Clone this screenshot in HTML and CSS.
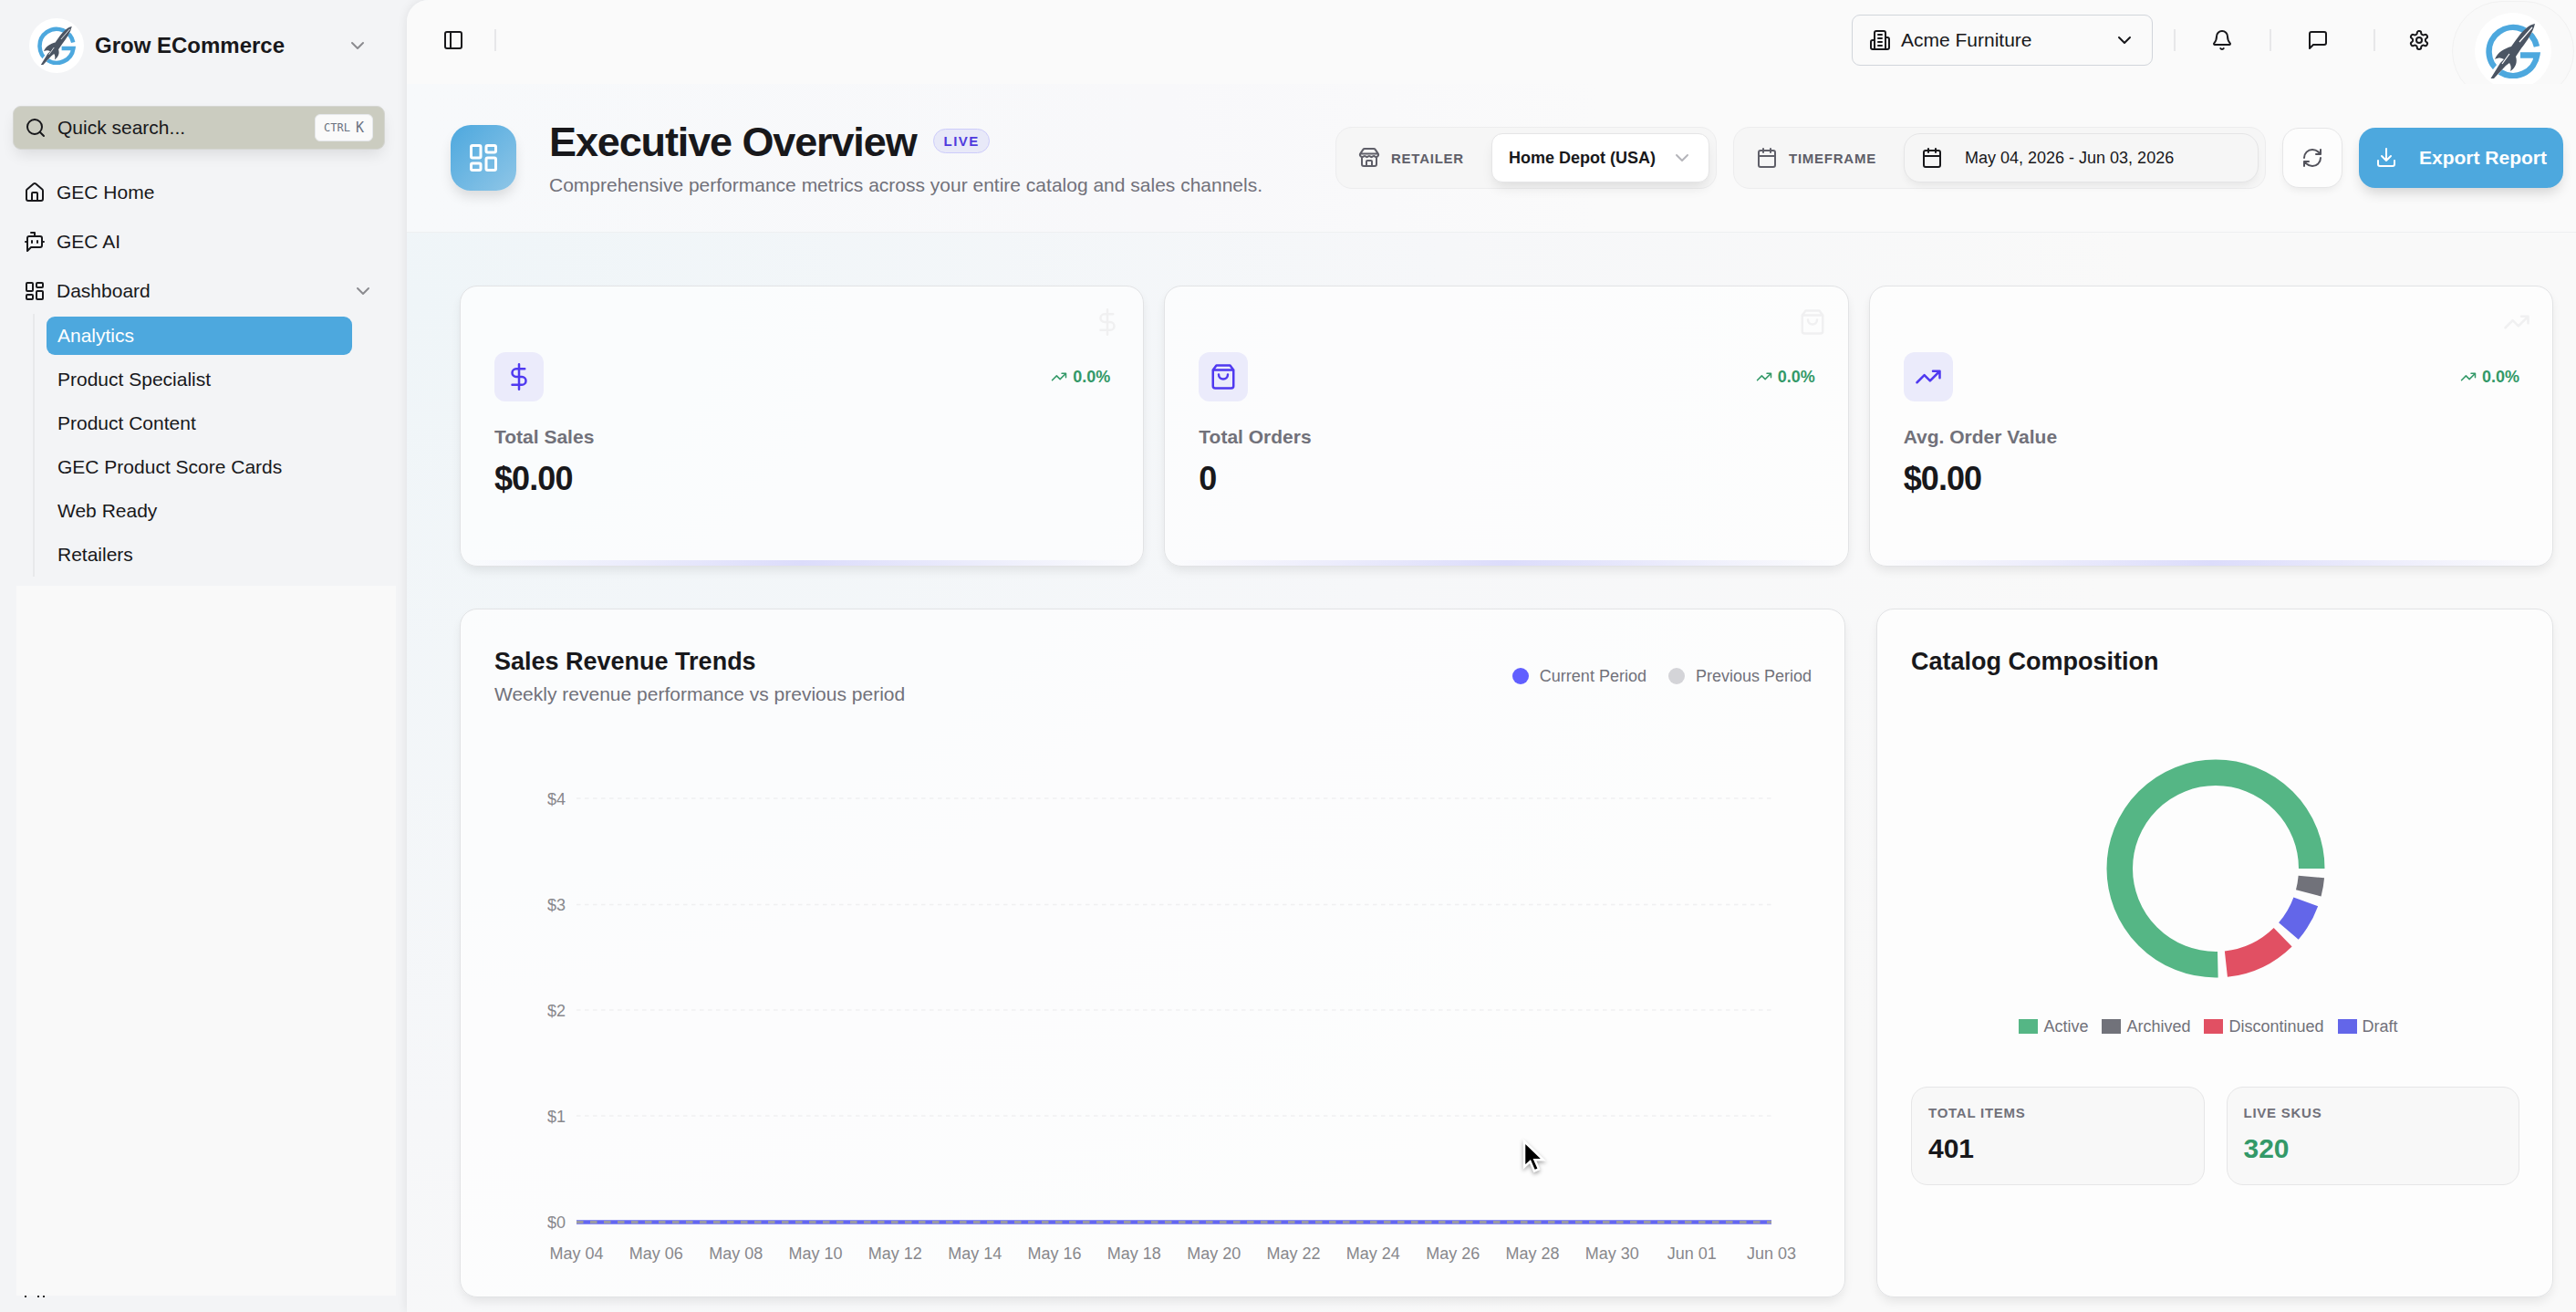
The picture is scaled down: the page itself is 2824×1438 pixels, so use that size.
FILE: index.html
```html
<!DOCTYPE html>
<html lang="en">
<head>
  <meta charset="UTF-8" />
  <meta name="viewport" content="width=device-width, initial-scale=1" />
  <title>Executive Overview</title>
  <link rel="stylesheet" href="styles.css">
</head>
<body>

  <!-- shared icons -->
  <svg class="sprite">
    <symbol id="logo" viewBox="0 0 60 60">
      <path class="logo-ring" d="M56 25 A26.500 26.500 0 1 0 56.300 34.400 L38 34.400" />
      <path class="logo-gap" d="M56 -3 L1 65" />
      <path class="logo-rocket" d="M54 0 C47 1 40 8 33 18 L28 25 C21 27 13 31 10 39 C14 37 17 37 20 39 L16 43 L5.500 60 L9 60 L22 46 L26 43 C28 46 28 49 27 52 C33 48 35 42 33 36 L39 27 C46 18 52 9 54 0 Z" />
      <path class="logo-shine" d="M51 4 L37 20 M26 33 L18 44" />
    </symbol>
    <symbol id="chevron" viewBox="0 0 24 24"><path d="m6 9 6 6 6-6" /></symbol>
    <symbol id="dashboard" viewBox="0 0 24 24">
      <rect x="3" y="3" width="7" height="9" rx="1" /><rect x="14" y="3" width="7" height="5" rx="1" />
      <rect x="14" y="12" width="7" height="9" rx="1" /><rect x="3" y="16" width="7" height="5" rx="1" />
    </symbol>
    <symbol id="calendar" viewBox="0 0 24 24"><path d="M8 2v4M16 2v4M3 10h18" /><rect x="3" y="4" width="18" height="18" rx="2" /></symbol>
    <symbol id="dollar" viewBox="0 0 24 24"><path d="M12 1v22M17 5H9.500a3.500 3.500 0 0 0 0 7h5a3.500 3.500 0 0 1 0 7H6" /></symbol>
    <symbol id="bag" viewBox="0 0 24 24"><path d="M6 2 3 6v14a2 2 0 0 0 2 2h14a2 2 0 0 0 2-2V6l-3-4ZM3 6h18M16 10a4 4 0 0 1-8 0" /></symbol>
    <symbol id="trend" viewBox="0 0 24 24"><path d="M16 7h6v6M22 7l-8.500 8.500-5-5L2 17" /></symbol>
  </svg>

  <aside class="sidebar">
    <div class="brand">
      <div class="brand-logo"><svg><use href="#logo" /></svg></div>
      <span class="brand-name">Grow ECommerce</span>
      <svg class="icon muted"><use href="#chevron" /></svg>
    </div>

    <div class="search">
      <svg class="icon" viewBox="0 0 24 24"><circle cx="11" cy="11" r="8" /><path d="m21 21-4.300-4.300" /></svg>
      <span>Quick search...</span>
      <kbd><small>CTRL</small>K</kbd>
    </div>

    <nav class="nav">
      <a class="nav-item">
        <svg class="icon" viewBox="0 0 24 24"><path d="M15 21v-8a1 1 0 0 0-1-1h-4a1 1 0 0 0-1 1v8" /><path d="M3 10a2 2 0 0 1 .709-1.528l7-6a2 2 0 0 1 2.582 0l7 6A2 2 0 0 1 21 10v9a2 2 0 0 1-2 2H5a2 2 0 0 1-2-2z" /></svg>
        GEC Home
      </a>
      <a class="nav-item">
        <svg class="icon" viewBox="0 0 24 24"><path d="M12 6V2H8M8 18l-4 4V8a2 2 0 0 1 2-2h12a2 2 0 0 1 2 2v8a2 2 0 0 1-2 2ZM2 12h2M9 11v2M15 11v2M20 12h2" /></svg>
        GEC AI
      </a>
      <a class="nav-item">
        <svg class="icon"><use href="#dashboard" /></svg>
        Dashboard
        <svg class="icon muted push"><use href="#chevron" /></svg>
      </a>
      <div class="subnav">
        <a class="active">Analytics</a>
        <a>Product Specialist</a>
        <a>Product Content</a>
        <a>GEC Product Score Cards</a>
        <a>Web Ready</a>
        <a>Retailers</a>
      </div>
    </nav>

    <div class="blank-panel"></div>
    <div class="clipped"><i></i><i></i><i></i></div>
  </aside>

  <main class="main">
    <div class="topbar">
      <svg class="icon" viewBox="0 0 24 24"><rect x="3" y="3" width="18" height="18" rx="2" /><path d="M9 3v18" /></svg>
      <span class="divider first"></span>

      <div class="company">
        <svg class="icon" viewBox="0 0 24 24"><path d="M6 22V4a2 2 0 0 1 2-2h8a2 2 0 0 1 2 2v18ZM6 12H4a2 2 0 0 0-2 2v6a2 2 0 0 0 2 2h2M18 9h2a2 2 0 0 1 2 2v9a2 2 0 0 1-2 2h-2M10 6h4M10 10h4M10 14h4M10 18h4" /></svg>
        <span>Acme Furniture</span>
        <svg class="icon push"><use href="#chevron" /></svg>
      </div>
      <span class="divider d1"></span>
      <svg class="icon" viewBox="0 0 24 24"><path d="M10.268 21a2 2 0 0 0 3.464 0M3.262 15.326A1 1 0 0 0 4 17h16a1 1 0 0 0 .740-1.673C19.410 13.956 18 12.499 18 8A6 6 0 0 0 6 8c0 4.499-1.411 5.956-2.738 7.326" /></svg>
      <span class="divider d2"></span>
      <svg class="icon" viewBox="0 0 24 24"><path d="M21 15a2 2 0 0 1-2 2H7l-4 4V5a2 2 0 0 1 2-2h14a2 2 0 0 1 2 2z" /></svg>
      <span class="divider d3"></span>
      <svg class="icon" viewBox="0 0 24 24"><path d="M12.220 2h-.440a2 2 0 0 0-2 2v.180a2 2 0 0 1-1 1.730l-.430.250a2 2 0 0 1-2 0l-.150-.080a2 2 0 0 0-2.730.730l-.220.380a2 2 0 0 0 .730 2.730l.150.100a2 2 0 0 1 1 1.720v.510a2 2 0 0 1-1 1.740l-.150.090a2 2 0 0 0-.730 2.730l.220.380a2 2 0 0 0 2.730.730l.150-.080a2 2 0 0 1 2 0l.430.250a2 2 0 0 1 1 1.730V20a2 2 0 0 0 2 2h.440a2 2 0 0 0 2-2v-.180a2 2 0 0 1 1-1.730l.430-.250a2 2 0 0 1 2 0l.150.080a2 2 0 0 0 2.730-.730l.220-.390a2 2 0 0 0-.730-2.730l-.150-.080a2 2 0 0 1-1-1.740v-.500a2 2 0 0 1 1-1.740l.150-.090a2 2 0 0 0 .730-2.730l-.220-.380a2 2 0 0 0-2.730-.730l-.150.080a2 2 0 0 1-2 0l-.430-.250a2 2 0 0 1-1-1.730V4a2 2 0 0 0-2-2z" /><circle cx="12" cy="12" r="3" /></svg>
      <div class="avatar-btn"><div class="avatar"><svg><use href="#logo" /></svg></div></div>
    </div>

    <header class="page-header">
      <div class="page-icon"><svg class="icon"><use href="#dashboard" /></svg></div>
      <div class="page-title">
        <div class="title-row">
          <h1>Executive Overview</h1>
          <span class="live">LIVE</span>
        </div>
        <p>Comprehensive performance metrics across your entire catalog and sales channels.</p>
      </div>

      <div class="filter retailer">
        <svg class="icon" viewBox="0 0 24 24"><path d="M15 21v-5a1 1 0 0 0-1-1h-4a1 1 0 0 0-1 1v5M2.500 7.500h19M17.774 10.310a1.120 1.120 0 0 0-1.549 0 2.500 2.500 0 0 1-3.451 0 1.120 1.120 0 0 0-1.548 0 2.500 2.500 0 0 1-3.452 0 1.120 1.120 0 0 0-1.549 0 2.500 2.500 0 0 1-3.770-3.248l2.889-4.184A2 2 0 0 1 7 2h10a2 2 0 0 1 1.653.873l2.895 4.192a2.500 2.500 0 0 1-3.774 3.244M4 10.950V19a2 2 0 0 0 2 2h12a2 2 0 0 0 2-2v-8.050" /></svg>
        <label>RETAILER</label>
        <div class="select">
          Home Depot (USA)
          <svg class="icon"><use href="#chevron" /></svg>
        </div>
      </div>
      <div class="filter timeframe">
        <svg class="icon"><use href="#calendar" /></svg>
        <label>TIMEFRAME</label>
        <div class="dates">
          <svg class="icon"><use href="#calendar" /></svg>
          May 04, 2026 - Jun 03, 2026
        </div>
      </div>
      <button class="refresh">
        <svg class="icon" viewBox="0 0 24 24"><path d="M3 12a9 9 0 0 1 9-9 9.750 9.750 0 0 1 6.740 2.740L21 8M21 3v5h-5M21 12a9 9 0 0 1-9 9 9.750 9.750 0 0 1-6.740-2.740L3 16M8 16H3v5" /></svg>
      </button>
      <button class="export">
        <svg class="icon" viewBox="0 0 24 24"><path d="M21 15v4a2 2 0 0 1-2 2H5a2 2 0 0 1-2-2v-4M7 10l5 5 5-5M12 15V2" /></svg>
        Export Report
      </button>
    </header>

    <section class="content">
      <div class="kpis">
        <div class="card kpi">
          <svg class="icon ghost"><use href="#dollar" /></svg>
          <div class="kpi-top">
            <div class="tile"><svg class="icon"><use href="#dollar" /></svg></div>
            <div class="change"><svg class="icon"><use href="#trend" /></svg>0.0%</div>
          </div>
          <div class="kpi-label">Total Sales</div>
          <div class="kpi-value">$0.00</div>
        </div>
        <div class="card kpi">
          <svg class="icon ghost"><use href="#bag" /></svg>
          <div class="kpi-top">
            <div class="tile"><svg class="icon"><use href="#bag" /></svg></div>
            <div class="change"><svg class="icon"><use href="#trend" /></svg>0.0%</div>
          </div>
          <div class="kpi-label">Total Orders</div>
          <div class="kpi-value">0</div>
        </div>
        <div class="card kpi">
          <svg class="icon ghost"><use href="#trend" /></svg>
          <div class="kpi-top">
            <div class="tile"><svg class="icon"><use href="#trend" /></svg></div>
            <div class="change"><svg class="icon"><use href="#trend" /></svg>0.0%</div>
          </div>
          <div class="kpi-label">Avg. Order Value</div>
          <div class="kpi-value">$0.00</div>
        </div>
      </div>

      <div class="charts">
        <div class="card trends">
          <div class="trends-head">
            <div>
              <h2>Sales Revenue Trends</h2>
              <p>Weekly revenue performance vs previous period</p>
            </div>
            <div class="legend">
              <span><i class="dot current"></i>Current Period</span>
              <span><i class="dot previous"></i>Previous Period</span>
            </div>
          </div>
          <svg class="line-chart" width="1443" height="600" viewBox="0 0 1443 600">
            <g class="grid">
              <path d="M90 76H1400M90 192.500H1400M90 308H1400M90 424H1400" />
            </g>
            <path class="line-current" d="M90 540.500H1400" />
            <path class="line-previous" d="M90 540.500H1400" />
            <g class="y-labels">
              <text x="78" y="82.500">$4</text>
              <text x="78" y="199">$3</text>
              <text x="78" y="314.500">$2</text>
              <text x="78" y="430.500">$1</text>
              <text x="78" y="547">$0</text>
            </g>
            <g class="x-labels">
              <text x="90" y="581">May 04</text>
              <text x="177.300" y="581">May 06</text>
              <text x="264.700" y="581">May 08</text>
              <text x="352" y="581">May 10</text>
              <text x="439.300" y="581">May 12</text>
              <text x="526.700" y="581">May 14</text>
              <text x="614" y="581">May 16</text>
              <text x="701.300" y="581">May 18</text>
              <text x="788.700" y="581">May 20</text>
              <text x="876" y="581">May 22</text>
              <text x="963.300" y="581">May 24</text>
              <text x="1050.700" y="581">May 26</text>
              <text x="1138" y="581">May 28</text>
              <text x="1225.300" y="581">May 30</text>
              <text x="1312.700" y="581">Jun 01</text>
              <text x="1400" y="581">Jun 03</text>
            </g>
          </svg>
        </div>

        <div class="card catalog">
          <h2>Catalog Composition</h2>
          <svg class="donut" width="240" height="240" viewBox="0 0 240 240">
            <circle class="seg-active" cx="120" cy="120" r="105.250" pathLength="360" stroke-dasharray="271.300 360" stroke-dashoffset="-88.700" />
            <circle class="seg-discontinued" cx="120" cy="120" r="105.250" pathLength="360" stroke-dasharray="38.100 360" stroke-dashoffset="-45.600" />
            <circle class="seg-draft" cx="120" cy="120" r="105.250" pathLength="360" stroke-dasharray="20.400 360" stroke-dashoffset="-20.200" />
            <circle class="seg-archived" cx="120" cy="120" r="105.250" pathLength="360" stroke-dasharray="9.800 360" stroke-dashoffset="-5" />
          </svg>
          <div class="catalog-legend">
            <span><i class="green"></i>Active</span>
            <span><i class="gray"></i>Archived</span>
            <span><i class="red"></i>Discontinued</span>
            <span><i class="indigo"></i>Draft</span>
          </div>
          <div class="stats">
            <div class="stat"><label>TOTAL ITEMS</label><b>401</b></div>
            <div class="stat"><label>LIVE SKUS</label><b class="up">320</b></div>
          </div>
        </div>
      </div>
    </section>
  </main>

  <svg class="cursor" width="32" height="44" viewBox="0 0 32 44"><path d="M5 3v28l6.500-6 4.500 10.500 5-2.200-4.500-10H26Z" /></svg>

</body>
</html>
```
FILE: styles.css
```css
* {
  box-sizing: border-box;
  margin: 0;
  padding: 0;
}

body {
  display: flex;
  width: 2824px;
  height: 1438px;
  overflow: hidden;
  background: #f3f4f6;
  color: #18181b;
  font-family: "Liberation Sans", Arial, sans-serif;
  font-size: 21px;
}

.sprite {
  display: none;
}

.icon {
  width: 24px;
  height: 24px;
  flex: none;
  fill: none;
  stroke: currentColor;
  stroke-width: 2;
  stroke-linecap: round;
  stroke-linejoin: round;
}

.muted {
  color: #8b8b90;
}

.push {
  margin-left: auto;
}

.logo-ring {
  fill: none;
  stroke: #4da8de;
  stroke-width: 6.5;
}

.logo-gap {
  fill: none;
  stroke: #fff;
  stroke-width: 8;
}

.logo-rocket {
  fill: #4b5563;
}

.logo-shine {
  fill: none;
  stroke: #fff;
  stroke-width: 1.2;
}

/* Sidebar */
.sidebar {
  width: 446px;
  flex: none;
  padding: 20px 12px 0 14px;
  display: flex;
  flex-direction: column;
}

.brand {
  display: flex;
  align-items: center;
  height: 60px;
  padding: 0 30px 0 18px;
}

.brand-logo {
  width: 60px;
  height: 60px;
  border-radius: 50%;
  background: #fff;
  padding: 9px;
}

.brand-logo svg {
  display: block;
  width: 42px;
  height: 42px;
}

.brand-name {
  flex: 1;
  margin-left: 12px;
  font-size: 24px;
  font-weight: bold;
}

.search {
  display: flex;
  align-items: center;
  gap: 12px;
  width: 408px;
  height: 48px;
  margin-top: 36px;
  padding: 0 12px 0 12px;
  background: #cbccc0;
  border: 1px solid #d5d6d2;
  border-radius: 9px;
  box-shadow: 0 8px 16px -3px rgba(0, 0, 0, 0.1);
}

.search kbd {
  display: flex;
  align-items: center;
  gap: 6px;
  width: 64px;
  height: 30px;
  margin-left: auto;
  padding-left: 9px;
  border: 1px solid #e5e7eb;
  border-radius: 6px;
  background: #fafafa;
  color: #6b7280;
  font: 15px "DejaVu Sans Mono", monospace;
}

.search small {
  font-size: 12px;
}

.nav-item {
  display: flex;
  align-items: center;
  gap: 12px;
  height: 54px;
  padding: 0 24px 0 12px;
}

.nav {
  margin-top: 20px;
}

.subnav {
  display: flex;
  flex-direction: column;
  gap: 6px;
  width: 350px;
  height: 288px;
  margin: -2px 0 0 22px;
  padding: 3px 0 0 13px;
  border-left: 2px solid #e8e9eb;
}

.subnav a {
  height: 42px;
  padding-left: 12px;
  border-radius: 9px;
  line-height: 41px;
}

.subnav .active {
  background: #4da8de;
  color: #fff;
}

.blank-panel {
  width: 416px;
  height: 778px;
  flex: none;
  margin: 10px 0 0 4px;
  background: #f9f9f9;
}

.clipped {
  display: flex;
  gap: 4px;
  padding-left: 13px;
}

.clipped i {
  width: 2px;
  height: 2px;
  background: #222;
}

.clipped i:first-child {
  margin-right: 8px;
}

/* Main area */
.main {
  flex: 1;
  min-width: 0;
  border-radius: 24px 0 0 0;
  background: radial-gradient(ellipse 1900px 1500px at 0 330px, #eff5f8 0, #f6f7f9 60%, #f9f9f9 100%);
  box-shadow: 0 0 12px rgba(0, 0, 0, 0.09);
}

.topbar {
  display: flex;
  align-items: center;
  height: 92px;
  padding: 0 2px 4px 39px;
  overflow: hidden;
  border-radius: 24px 0 0 0;
  background: #fafafa;
}

.divider {
  width: 2px;
  height: 24px;
  background: #e7e7e9;
}

.divider.first {
  margin-left: 33px;
}

.company {
  display: flex;
  align-items: center;
  gap: 11px;
  width: 330px;
  height: 56px;
  margin-left: auto;
  padding: 0 18px;
  border: 1px solid #d1d5db;
  border-radius: 9px;
}

.d1 {
  margin: 0 39px 0 23px;
}

.d2 {
  margin: 0 39px 0 40px;
}

.d3 {
  margin: 0 36px 0 49px;
}

.avatar-btn {
  display: flex;
  justify-content: center;
  align-items: center;
  width: 134px;
  height: 110px;
  flex: none;
  margin: 24px 0 0 24px;
  border: 1px solid #f1f1f1;
  border-radius: 55px;
  background: #f9f9f9;
}

.avatar {
  width: 84px;
  height: 84px;
  padding: 12px;
  border-radius: 50%;
  background: #fff;
}

.avatar svg {
  display: block;
  width: 60px;
  height: 60px;
}

.page-header {
  display: flex;
  align-items: center;
  height: 163px;
  padding: 0 14px 0 48px;
  border-bottom: 1px solid #eef0f1;
  background: linear-gradient(to right, #f7f9fb, #f8f8fa 35%, #fafafa 55%);
}

.page-icon {
  display: flex;
  align-items: center;
  justify-content: center;
  width: 72px;
  height: 72px;
  border-radius: 22px;
  background: linear-gradient(135deg, #4da8de, #8fc6e7);
  color: #fff;
  box-shadow: 0 8px 14px -2px rgba(0, 0, 0, 0.13);
}

.page-icon .icon {
  width: 36px;
  height: 36px;
}

.page-title {
  margin: 0 0 0 36px;
}

.title-row {
  display: flex;
  align-items: center;
  gap: 18px;
}

h1 {
  font-size: 45px;
  line-height: 54px;
  letter-spacing: -1.125px;
}

.live {
  height: 27px;
  padding: 0 10.500px 0 11px;
  margin-top: -3px;
  border: 1px solid #cdccfb;
  border-radius: 14px;
  background: #e8e9f8;
  color: #4f3bdd;
  font-size: 15px;
  font-weight: bold;
  line-height: 25px;
  letter-spacing: 1.500px;
}

.page-title p {
  margin-top: 5px;
  line-height: 30px;
  color: #71717a;
  white-space: nowrap;
}

.filter {
  display: flex;
  align-items: center;
  height: 68px;
  padding: 0 7px 0 24px;
  border: 1px solid #ededee;
  border-radius: 18px;
  background: #f6f6f6;
  color: #5f5f69;
}

.filter label {
  margin-left: 12px;
  font-size: 15px;
  font-weight: bold;
  letter-spacing: 0.750px;
}

.retailer {
  width: 418px;
  margin-left: auto;
}

.timeframe {
  width: 584px;
  margin-left: 18px;
}

.select,
.dates {
  display: flex;
  align-items: center;
  height: 54px;
  margin-left: auto;
  border: 1px solid #e5e5e6;
  color: #18181b;
  font-size: 18px;
  box-shadow: 0 8px 14px -3px rgba(0, 0, 0, 0.1);
}

.select {
  width: 239px;
  padding: 0 17px 0 18px;
  justify-content: space-between;
  border-radius: 12px;
  background: #fff;
  font-weight: bold;
}

.select .icon {
  color: #b5b5ba;
}

.dates {
  width: 389px;
  padding-left: 18px;
  gap: 24px;
  border-radius: 18px;
  background: #f6f6f6;
  box-shadow: 0 6px 10px -3px rgba(0, 0, 0, 0.07);
}

button {
  display: flex;
  align-items: center;
  justify-content: center;
  height: 66px;
  margin-left: 18px;
  border: none;
  border-radius: 18px;
  font: bold 21px "Liberation Sans", Arial, sans-serif;
}

.refresh {
  width: 66px;
  border: 1px solid #e6e6e7;
  background: #fdfdfd;
  color: #52525b;
  box-shadow: 0 5px 10px -3px rgba(0, 0, 0, 0.08);
}

.export {
  width: 224px;
  gap: 24px;
  background: #4da8de;
  color: #fff;
  box-shadow: 0 8px 14px -3px rgba(0, 0, 0, 0.16);
}

.content {
  padding: 58px 25px 0 58px;
}

.card {
  position: relative;
  border: 1px solid #e2e3e5;
  border-radius: 19px;
  background: rgba(255, 255, 255, 0.65);
  box-shadow: 0 6px 12px -2px rgba(0, 0, 0, 0.09);
}

.kpis {
  display: flex;
  gap: 22px;
}

.kpi {
  flex: 1;
  height: 308px;
  padding: 72px 36px 0 37px;
  overflow: hidden;
}

.kpi::after {
  content: "";
  position: absolute;
  left: 0;
  right: 0;
  bottom: 0;
  height: 6px;
  background: linear-gradient(to right, rgba(220, 220, 251, 0), #dcdcfb, rgba(220, 220, 251, 0));
}

.ghost {
  position: absolute;
  top: 24px;
  right: 24px;
  width: 30px;
  height: 30px;
  color: #f0f0f1;
}

.kpi-top {
  display: flex;
  align-items: center;
  justify-content: space-between;
}

.tile {
  display: flex;
  align-items: center;
  justify-content: center;
  width: 54px;
  height: 54px;
  border-radius: 12px;
  background: #ebebfb;
  color: #4f39f0;
}

.tile .icon {
  width: 30px;
  height: 30px;
}

.change {
  display: flex;
  align-items: center;
  gap: 6px;
  color: #339968;
  font-size: 18px;
  font-weight: bold;
}

.change .icon {
  width: 18px;
  height: 18px;
}

.kpi-label {
  margin-top: 24px;
  line-height: 30px;
  color: #71717a;
  font-weight: bold;
}

.kpi-value {
  margin-top: 10px;
  font-size: 36px;
  font-weight: bold;
  line-height: 42px;
  letter-spacing: -0.900px;
}

.charts {
  display: flex;
  gap: 34px;
  margin-top: 46px;
}

.charts .card {
  height: 755px;
  padding: 37px 36px 36px 37px;
}

.trends {
  width: 1519px;
}

h2 {
  font-size: 27px;
  line-height: 40px;
}

.trends-head {
  display: flex;
  align-items: center;
  justify-content: space-between;
}

.trends-head p {
  line-height: 32px;
  color: #71717a;
}

.legend {
  display: flex;
  gap: 24px;
  color: #71717a;
  font-size: 18px;
}

.legend span {
  display: flex;
  align-items: center;
  gap: 12px;
}

.dot {
  width: 18px;
  height: 18px;
  border-radius: 50%;
}

.current {
  background: #615fff;
}

.previous {
  background: #d4d4d8;
}

.line-chart {
  display: block;
  margin-top: 22px;
}

.grid path {
  fill: none;
  stroke: #f0f0f1;
  stroke-width: 1.5;
  stroke-dasharray: 4.5 4.5;
}

.line-current {
  fill: none;
  stroke: #6366f1;
  stroke-width: 4.5;
}

.line-previous {
  fill: none;
  stroke: #9a9aa3;
  stroke-width: 3;
  stroke-dasharray: 7.5 7.5;
}

.line-chart text {
  fill: #88888c;
  font-size: 18px;
}

.y-labels {
  text-anchor: end;
}

.x-labels {
  text-anchor: middle;
}

.catalog {
  flex: 1;
}

.donut {
  display: block;
  margin: 87px auto 0;
}

.donut circle {
  fill: none;
  stroke-width: 28.5;
}

.donut .seg-active {
  stroke: #55b685;
}

.donut .seg-discontinued {
  stroke: #e15063;
}

.donut .seg-draft {
  stroke: #6366e9;
}

.donut .seg-archived {
  stroke: #71727a;
}

.catalog-legend {
  display: flex;
  justify-content: center;
  margin-top: 42px;
  line-height: 22px;
  color: #71717a;
  font-size: 18px;
}

.catalog-legend span {
  display: flex;
  align-items: center;
  gap: 6px;
  margin-right: 15px;
}

.catalog-legend i {
  width: 21px;
  height: 16px;
}

.green {
  background: #55b685;
}

.gray {
  background: #71727a;
}

.red {
  background: #e15063;
}

.indigo {
  background: #6366e9;
}

.stats {
  display: flex;
  gap: 24px;
  margin-top: 55px;
}

.stat {
  flex: 1;
  height: 108px;
  padding: 17px 18px;
  border: 1px solid #e6e6e7;
  border-radius: 18px;
  background: #f8f8f8;
}

.stat label {
  display: block;
  color: #71717a;
  font-size: 15px;
  font-weight: bold;
  line-height: 22px;
  letter-spacing: 0.750px;
}

.stat b {
  display: block;
  margin-top: 7px;
  font-size: 30px;
  line-height: 42px;
}

.stat .up {
  color: #339968;
}

.cursor {
  position: absolute;
  left: 1666px;
  top: 1248px;
  stroke: #fff;
  stroke-width: 2.5;
  filter: drop-shadow(0 2px 2px rgba(0, 0, 0, 0.35));
}
```
